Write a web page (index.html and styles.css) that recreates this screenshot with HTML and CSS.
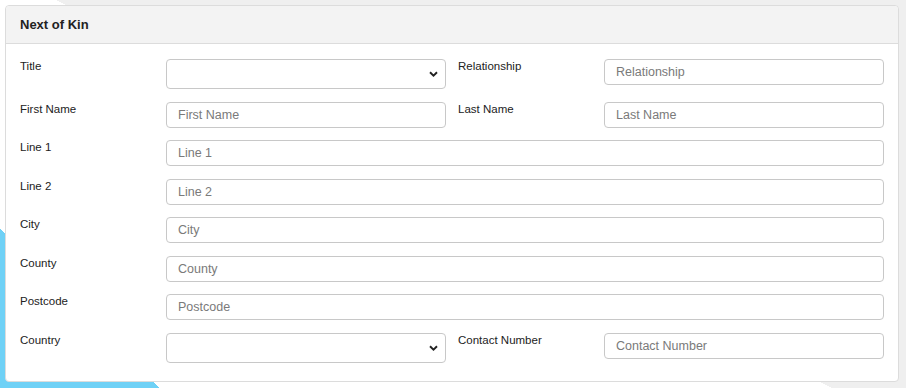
FILE: index.html
```html
<!DOCTYPE html>
<html lang="en">

<head>
    <meta charset="UTF-8">
    <meta name="viewport" content="width=device-width, initial-scale=1.0">
    <title>Next of Kin</title>
    <link rel="stylesheet" href="styles.css">
</head>

<body>
    <div class="panel">
        <div class="panel-heading">Next of Kin</div>
        <div class="panel-body">
            <div class="form-row">
                <div class="form-group">
                    <label>Title</label>
                    <div class="select-wrap">
                        <select class="form-control select"><option></option></select>
                        <svg class="chevron" width="9" height="6" viewBox="0 0 9 6"><path d="M1 1.2 L4.5 4.6 L8 1.2" fill="none" stroke="#222" stroke-width="1.9"/></svg>
                    </div>
                </div>
                <div class="form-group">
                    <label>Relationship</label>
                    <input class="form-control" type="text" placeholder="Relationship">
                </div>
            </div>
            <div class="form-row">
                <div class="form-group">
                    <label>First Name</label>
                    <input class="form-control" type="text" placeholder="First Name">
                </div>
                <div class="form-group">
                    <label>Last Name</label>
                    <input class="form-control" type="text" placeholder="Last Name">
                </div>
            </div>
            <div class="form-row">
                <div class="form-group">
                    <label>Line 1</label>
                    <input class="form-control" type="text" placeholder="Line 1">
                </div>
            </div>
            <div class="form-row">
                <div class="form-group">
                    <label>Line 2</label>
                    <input class="form-control" type="text" placeholder="Line 2">
                </div>
            </div>
            <div class="form-row">
                <div class="form-group">
                    <label>City</label>
                    <input class="form-control" type="text" placeholder="City">
                </div>
            </div>
            <div class="form-row">
                <div class="form-group">
                    <label>County</label>
                    <input class="form-control" type="text" placeholder="County">
                </div>
            </div>
            <div class="form-row">
                <div class="form-group">
                    <label>Postcode</label>
                    <input class="form-control" type="text" placeholder="Postcode">
                </div>
            </div>
            <div class="form-row">
                <div class="form-group">
                    <label>Country</label>
                    <div class="select-wrap">
                        <select class="form-control select"><option></option></select>
                        <svg class="chevron" width="9" height="6" viewBox="0 0 9 6"><path d="M1 1.2 L4.5 4.6 L8 1.2" fill="none" stroke="#222" stroke-width="1.9"/></svg>
                    </div>
                </div>
                <div class="form-group">
                    <label>Contact Number</label>
                    <input class="form-control" type="text" placeholder="Contact Number">
                </div>
            </div>
        </div>
    </div>
</body>

</html>
```

FILE: styles.css
```css
/* Reset & Global Styling */
* {
    margin: 0;
    padding: 0;
    box-sizing: border-box;
}

body {
    font-family: 'Liberation Sans', Arial, sans-serif;
    color: #222;
    padding: 5px 7px 5px 5px;
    background:
        linear-gradient(45deg, #6fd1f6 113px, transparent 113px),
        linear-gradient(26.57deg, #ffffff 372px, #efefef 372px);
    min-height: 388px;
}

.panel {
    background-color: #fff;
    border: 1px solid #dcdcdc;
    border-radius: 4px;
}

.panel-heading {
    height: 38px;
    line-height: 37px;
    padding: 0 14px;
    background-color: #f3f3f3;
    border-bottom: 1px solid #dcdcdc;
    border-radius: 4px 4px 0 0;
    font-size: 13px;
    font-weight: bold;
    color: #222;
}

.panel-body {
    padding: 15px 14px 18px;
}

.form-row {
    display: flex;
    gap: 12px;
    margin-bottom: 12.5px;
}

.form-row:last-child {
    margin-bottom: 0;
}

.form-group {
    flex: 1;
    display: flex;
    align-items: flex-start;
}

.form-group label {
    width: 146px;
    flex-shrink: 0;
    padding-top: 1px;
    font-size: 11.5px;
    color: #222;
}

.form-control {
    flex: 1;
    min-width: 0;
    height: 26px;
    padding: 0 11px;
    font-family: inherit;
    font-size: 12.5px;
    color: #333;
    background-color: #fff;
    border: 1px solid #c8c8c8;
    border-radius: 4px;
    outline: none;
}

.form-control::placeholder {
    color: #7a7a7a;
}

.select-wrap {
    flex: 1;
    position: relative;
    display: flex;
}

.select {
    height: 30px;
    appearance: none;
    -webkit-appearance: none;
}

.chevron {
    position: absolute;
    right: 8px;
    top: 12px;
    pointer-events: none;
}
```
